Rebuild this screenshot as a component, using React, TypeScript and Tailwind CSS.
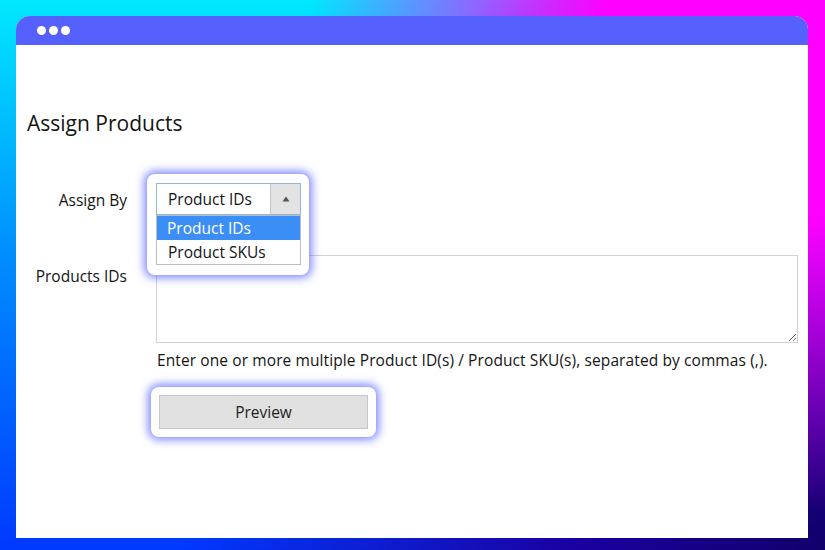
import React from 'react';

const font = { fontFamily: '"Open Sans", "Noto Sans", sans-serif' };

export default function App() {
  return (
    <div
      style={font}
      className="w-[825px] h-[550px] pt-[16px] pl-[16px] pr-[17px] pb-[12px] bg-[radial-gradient(circle_at_100%_0%,#ff00ff_0%,#ff00ff_22%,transparent_52%),radial-gradient(circle_at_100%_100%,#12006a_0%,#1a00a0_25%,transparent_65%),linear-gradient(to_bottom,#00e8ff,#0090ff_45%,#0038ff)]"
    >
      <div className="flex flex-col h-full bg-white rounded-t-[14px] overflow-hidden">
        {/* title bar */}
        <div className="h-[29px] shrink-0 bg-[#5660fd] flex items-center gap-[3px] pl-[21px]">
          <span className="w-[9px] h-[9px] rounded-full bg-white" />
          <span className="w-[9px] h-[9px] rounded-full bg-white" />
          <span className="w-[9px] h-[9px] rounded-full bg-white" />
        </div>

        <div className="flex-1 text-[#141414]">
          <h1 className="mt-[64px] ml-[11px] text-[21px] leading-[28px] font-normal">Assign Products</h1>

          {/* Assign By */}
          <div className="flex items-center gap-[29px] mt-[46px]">
            <div className="w-[111px] text-right text-[15.5px] pt-[3px]">Assign By</div>
            <div className="relative w-[145px] h-[32px]">
              <div className="absolute -left-[9px] -top-[9px] -right-[8px] -bottom-[60px] rounded-lg bg-white shadow-[0_0_9px_3px_rgba(90,100,255,0.75)] z-10" />
              <div className="relative z-20 flex h-full border border-[#8fb6dc] bg-white">
                <div className="flex-1 flex items-center pl-[11px] pt-[2px] text-[15.5px]">Product IDs</div>
                <div className="w-[30px] flex items-center justify-center bg-[#e3e3e3] border-l border-[#c4c4c4]">
                  <svg width="8" height="6" viewBox="0 0 8 6">
                    <path d="M4 0.5 L7.5 5.5 L0.5 5.5 Z" fill="#555" />
                  </svg>
                </div>
              </div>
              <div className="absolute z-20 left-0 right-0 top-full border border-[#bdbdbd] bg-white text-[15.5px]">
                <div className="h-[24px] flex items-center pl-[10px] pt-[2px] bg-[#3b8ef5] text-white">Product IDs</div>
                <div className="h-[24px] flex items-center pl-[11px] pt-[2px]">Product SKUs</div>
              </div>
            </div>
          </div>

          {/* Products IDs */}
          <div className="flex gap-[29px] mt-[40px] pr-[10px]">
            <div className="w-[111px] text-right text-[15.5px] pt-[10px]">Products IDs</div>
            <div className="flex-1">
              <textarea className="block w-full h-[88px] border border-[#d2d2d2] outline-none resize-y" />
              <div className="mt-[7px] text-[15.5px] leading-[20px] tracking-[0.1px] pl-[1px]">
                Enter one or more multiple Product ID(s) / Product SKU(s), separated by commas (,).
              </div>
              <div className="mt-[25px] ml-[3px] relative w-[209px]">
                <div className="absolute -left-[8px] -top-[8px] -right-[8px] -bottom-[8px] rounded-lg bg-white shadow-[0_0_9px_3px_rgba(90,100,255,0.75)]" />
                <button className="relative w-full h-[34px] pt-[2px] bg-[#e1e1e1] border border-[#c8c8c8] text-[15.5px] text-[#222]">
                  Preview
                </button>
              </div>
            </div>
          </div>
        </div>
      </div>
    </div>
  );
}
